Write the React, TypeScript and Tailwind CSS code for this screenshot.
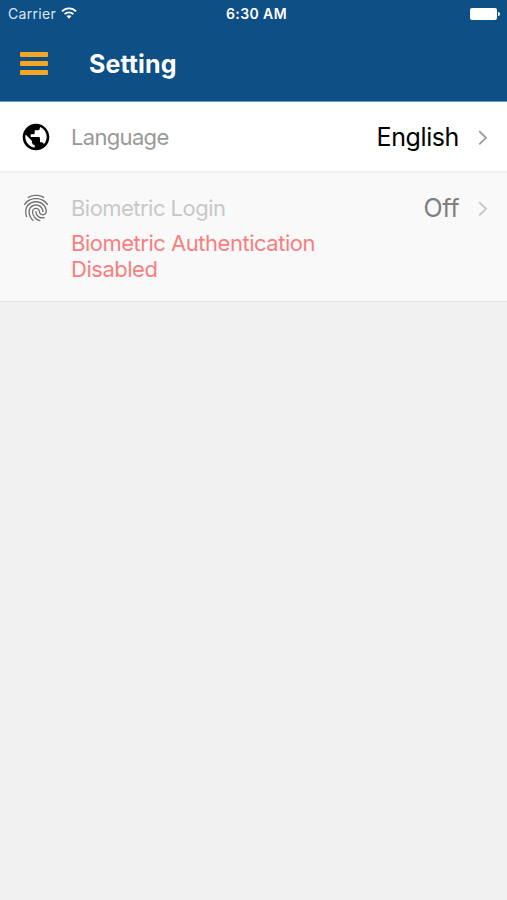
import type { ReactNode } from 'react';
import { MdFingerprint, MdPublic } from 'react-icons/md';

interface SettingRowProps {
  icon: ReactNode;
  label: string;
  labelClass: string;
  value: string;
  valueClass: string;
  chevronClass: string;
  className: string;
  note?: string;
}

function StatusBar() {
  return (
    <div className="grid grid-cols-3 items-center h-[27px] pl-[8px] pr-[7px] text-white">
      <div className="flex items-center gap-[5px]">
        <span className="text-[14px] leading-[27px] tracking-[0.3px] text-[#dbe8f3]">Carrier</span>
        <svg className="w-[16px] h-[12px] -mt-[2px]" viewBox="0 0 16 12" fill="none" stroke="currentColor" strokeWidth="1.9">
          <path d="M1 4.4C4.8 0.3 11.2 0.3 15 4.4" />
          <path d="M3.6 7.2C6 4.7 10 4.7 12.4 7.2" />
          <path d="M8 11.7L5.5 9.1C6.9 7.8 9.1 7.8 10.5 9.1Z" fill="currentColor" stroke="none" />
        </svg>
      </div>
      <span className="pl-[5px] text-center text-[14px] leading-[27px] font-semibold tracking-[0.4px] whitespace-nowrap">6:30 AM</span>
      <div className="flex items-center justify-end gap-px">
        <div className="w-[27px] h-[12px] rounded-[2px] bg-white" />
        <div className="w-[2px] h-[4px] rounded-r-full bg-white" />
      </div>
    </div>
  );
}

function SettingRow({ icon, label, labelClass, value, valueClass, chevronClass, className, note }: SettingRowProps) {
  return (
    <div className={`flex items-start pl-[20px] pr-[19px] ${className}`}>
      <div className="flex items-center w-[51px] h-[32px] shrink-0">{icon}</div>
      <div className="flex-1">
        <p className={`text-[22px] leading-[32px] ${labelClass}`}>{label}</p>
        {note && (
          <p className="w-[260px] mt-[6px] text-[22px] leading-[26px] tracking-[-0.48px] text-[#f77f7f]">{note}</p>
        )}
      </div>
      <span className={`text-[25px] leading-[32px] ${valueClass}`}>{value}</span>
      <svg
        className={`w-[10px] h-[32px] ml-[19px] ${chevronClass}`}
        viewBox="0 0 10 32"
        fill="none"
        stroke="currentColor"
        strokeWidth="1.8"
      >
        <path d="M1.2 10.2L8 16.8L1.2 23.4" />
      </svg>
    </div>
  );
}

export default function App() {
  return (
    <div className="flex flex-col h-screen overflow-hidden bg-[#f1f1f1] font-['Inter',sans-serif]">
      {/* Header */}
      <header className="h-[102px] shrink-0 bg-[#0e5085] border-b border-[#6c9bc2]">
        <StatusBar />
        <div className="flex items-center h-[74px] pl-[20px] gap-[41px]">
          <button className="flex flex-col gap-[4px] w-[28px] -mt-px">
            <span className="h-[5px] rounded-[1px] bg-[#f5a623]" />
            <span className="h-[5px] rounded-[1px] bg-[#f5a623]" />
            <span className="h-[5px] rounded-[1px] bg-[#f5a623]" />
          </button>
          <h1 className="text-[25px] leading-[32px] font-bold tracking-[0.1px] text-white">Setting</h1>
        </div>
      </header>

      {/* Settings list */}
      <SettingRow
        className="h-[71px] pt-[19px] bg-white border-b-2 border-[#efefef]"
        icon={<MdPublic className="w-[32px] h-[32px] text-black" />}
        label="Language"
        labelClass="tracking-[-0.68px] text-[#999999]"
        value="English"
        valueClass="tracking-[-0.4px] text-black"
        chevronClass="text-[#9a9a9a]"
      />
      <SettingRow
        className="h-[129px] pt-[19px] bg-[#f9f9f9] border-b border-[#e4e4e4]"
        icon={<MdFingerprint className="w-[32px] h-[32px] text-[#707070]" />}
        label="Biometric Login"
        labelClass="tracking-[-0.53px] text-[#c8c8c8]"
        value="Off"
        valueClass="tracking-[-0.4px] text-[#7f7f7f]"
        chevronClass="text-[#c4c4c4]"
        note="Biometric Authentication Disabled"
      />
    </div>
  );
}
